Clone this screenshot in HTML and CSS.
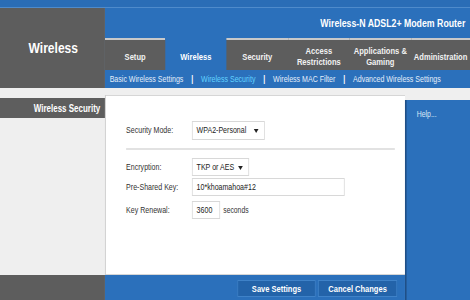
FILE: index.html
```html
<!DOCTYPE html>
<html>
<head>
<meta charset="utf-8">
<link rel="stylesheet" href="styles.css">
</head>
<body>
<div class="page">
  <div class="topband"></div>
  <div class="header">
    <div class="brand">Wireless</div>
    <div class="headright">
      <div class="title">Wireless-N ADSL2+ Modem Router</div>
      <div class="tabs">
        <div class="tab t1">Setup</div>
        <div class="tab t2 active">Wireless</div>
        <div class="tab t3">Security</div>
        <div class="tab t4">Access<br>Restrictions</div>
        <div class="tab t5">Applications &amp;<br>Gaming</div>
        <div class="tab t6">Administration</div>
      </div>
      <div class="subnav">
        <span class="sublink">Basic Wireless Settings</span>
        <span class="sep">|</span>
        <span class="sublink current">Wireless Security</span>
        <span class="sep">|</span>
        <span class="sublink">Wireless MAC Filter</span>
        <span class="sep">|</span>
        <span class="sublink">Advanced Wireless Settings</span>
      </div>
    </div>
  </div>
  <div class="main">
    <div class="sidebar">
      <div class="sidehead">Wireless Security</div>
    </div>
    <div class="content">
      <div class="row r-mode">
        <div class="label">Security Mode:</div>
        <div class="select w-mode">WPA2-Personal<span class="arrow"></span></div>
      </div>
      <div class="rule"></div>
      <div class="row r-enc">
        <div class="label">Encryption:</div>
        <div class="select w-enc">TKP or AES<span class="arrow"></span></div>
      </div>
      <div class="row r-key">
        <div class="label">Pre-Shared Key:</div>
        <div class="input w-key">10*khoamahoa#12</div>
      </div>
      <div class="row r-ren">
        <div class="label">Key Renewal:</div>
        <div class="input w-ren">3600</div>
        <div class="unit">seconds</div>
      </div>
    </div>
    <div class="help">Help...</div>
    <div class="footleft"></div>
    <div class="footer">
      <div class="btn b-save">Save Settings</div>
      <div class="btn b-cancel">Cancel Changes</div>
    </div>
  </div>
</div>
</body>
</html>
```
FILE: styles.css
```css
html, body {
  margin: 0;
  padding: 0;
}
body {
  width: 470px;
  height: 300px;
  overflow: hidden;
  background: #ffffff;
  font-family: "Liberation Sans", Arial, sans-serif;
}
/* The original screen is 600px wide, shown squeezed to 470px */
.page {
  width: 600px;
  height: 300px;
  display: flex;
  flex-direction: column;
  transform: scaleX(0.78333);
  transform-origin: 0 0;
}
.topband {
  height: 7px;
  background: #2a6db6;
  border-bottom: 1px solid #4f8bcb;
}
.header {
  display: grid;
  grid-template-columns: 134px 1fr;
  height: 80px;
}
.brand {
  background: #5d5d5d;
  color: #ffffff;
  font-weight: bold;
  font-size: 15.4px;
  display: flex;
  align-items: center;
  justify-content: center;
  padding-left: 2px;
}
.headright {
  display: flex;
  flex-direction: column;
  background: #2b70bb;
  overflow: hidden;
}
.title {
  height: 30px;
  display: flex;
  align-items: center;
  justify-content: flex-end;
  padding-right: 6px;
  color: #ffffff;
  font-weight: bold;
  font-size: 11.2px;
}
.tabs {
  height: 32px;
  display: flex;
  background: #5d5d5d;
  overflow: hidden;
}
.tab {
  flex: none;
  box-sizing: border-box;
  border-top: 2px solid #c9c9c9;
  color: #f2f2f2;
  font-weight: bold;
  font-size: 9.7px;
  line-height: 11px;
  text-align: center;
  display: flex;
  align-items: center;
  justify-content: center;
  padding-top: 2px;
  white-space: nowrap;
}
.tab.active {
  background: #2b70bb;
  border-top-color: #2b70bb;
  color: #ffffff;
}
.t1 { width: 77px; }
.t2 { width: 78px; }
.t3 { width: 79px; }
.t4 { width: 78px; }
.t5 { width: 79px; }
.t6 { width: 75px; }
.subnav {
  height: 18px;
  display: flex;
  align-items: center;
  padding-left: 6px;
  color: #e4eefa;
  font-size: 9px;
  white-space: nowrap;
}
.sep {
  margin: 0 10px 0 10px;
  font-weight: bold;
  color: #ffffff;
}
.current {
  color: #62d3ff;
}
.main {
  flex: 1;
  display: grid;
  grid-template-columns: 134px 383px 83px;
  grid-template-rows: 1fr 25px;
  background: #efefef;
}
.sidebar {
  background: #efefef;
  padding-top: 10px;
}
.sidehead {
  height: 20px;
  background: #5e5e5e;
  color: #ffffff;
  font-weight: bold;
  font-size: 10.2px;
  display: flex;
  align-items: center;
  justify-content: flex-end;
  padding-right: 6px;
}
.content {
  margin-top: 7px;
  background: #ffffff;
  border-left: 1px solid #c4c4c4;
  border-top: 1px solid #d6d6d6;
  border-bottom: 1px solid #d6d6d6;
  padding: 25px 13px 0 26px;
  font-size: 9px;
  color: #333333;
}
.row {
  display: flex;
  align-items: center;
  height: 18px;
}
.r-key { margin-top: 2px; }
.r-ren { margin-top: 5px; }
.label {
  width: 84px;
  flex: none;
}
.select, .input {
  box-sizing: border-box;
  height: 18px;
  border: 1px solid #d8d8d8;
  background: #ffffff;
  display: flex;
  align-items: center;
  padding-left: 5px;
  color: #222222;
  font-size: 9px;
  position: relative;
}
.w-mode { width: 93px; height: 19px; }
.w-enc { width: 73px; }
.w-key { width: 195px; }
.w-ren { width: 36px; }
.arrow {
  position: absolute;
  right: 7px;
  top: 7px;
  width: 0;
  height: 0;
  border-left: 3.5px solid transparent;
  border-right: 3.5px solid transparent;
  border-top: 4px solid #222222;
}
.rule {
  height: 2px;
  background: #e2e2e2;
  margin: 9px 0 8px 0;
}
.unit {
  margin-left: 4px;
  font-size: 8.7px;
}
.help {
  grid-column: 3;
  grid-row: 1 / 3;
  margin-top: 12px;
  background: #2b70bb;
  border-left: 2px solid #1f4f86;
  color: #d9e8f8;
  font-size: 8.8px;
  padding: 9px 0 0 13px;
}
.footleft {
  grid-column: 1;
  grid-row: 2;
  background: #5d5d5d;
}
.footer {
  grid-column: 2;
  grid-row: 2;
  background: #2b70bb;
  display: flex;
  justify-content: flex-end;
  align-items: center;
  gap: 3px;
  padding-right: 10px;
  padding-top: 2px;
}
.btn {
  height: 17px;
  box-sizing: border-box;
  background: #2363a9;
  border: 1px solid #3f82c8;
  color: #ffffff;
  font-weight: bold;
  font-size: 9.6px;
  display: flex;
  align-items: center;
  justify-content: center;
}
.b-save { width: 100px; }
.b-cancel { width: 101px; }
```
